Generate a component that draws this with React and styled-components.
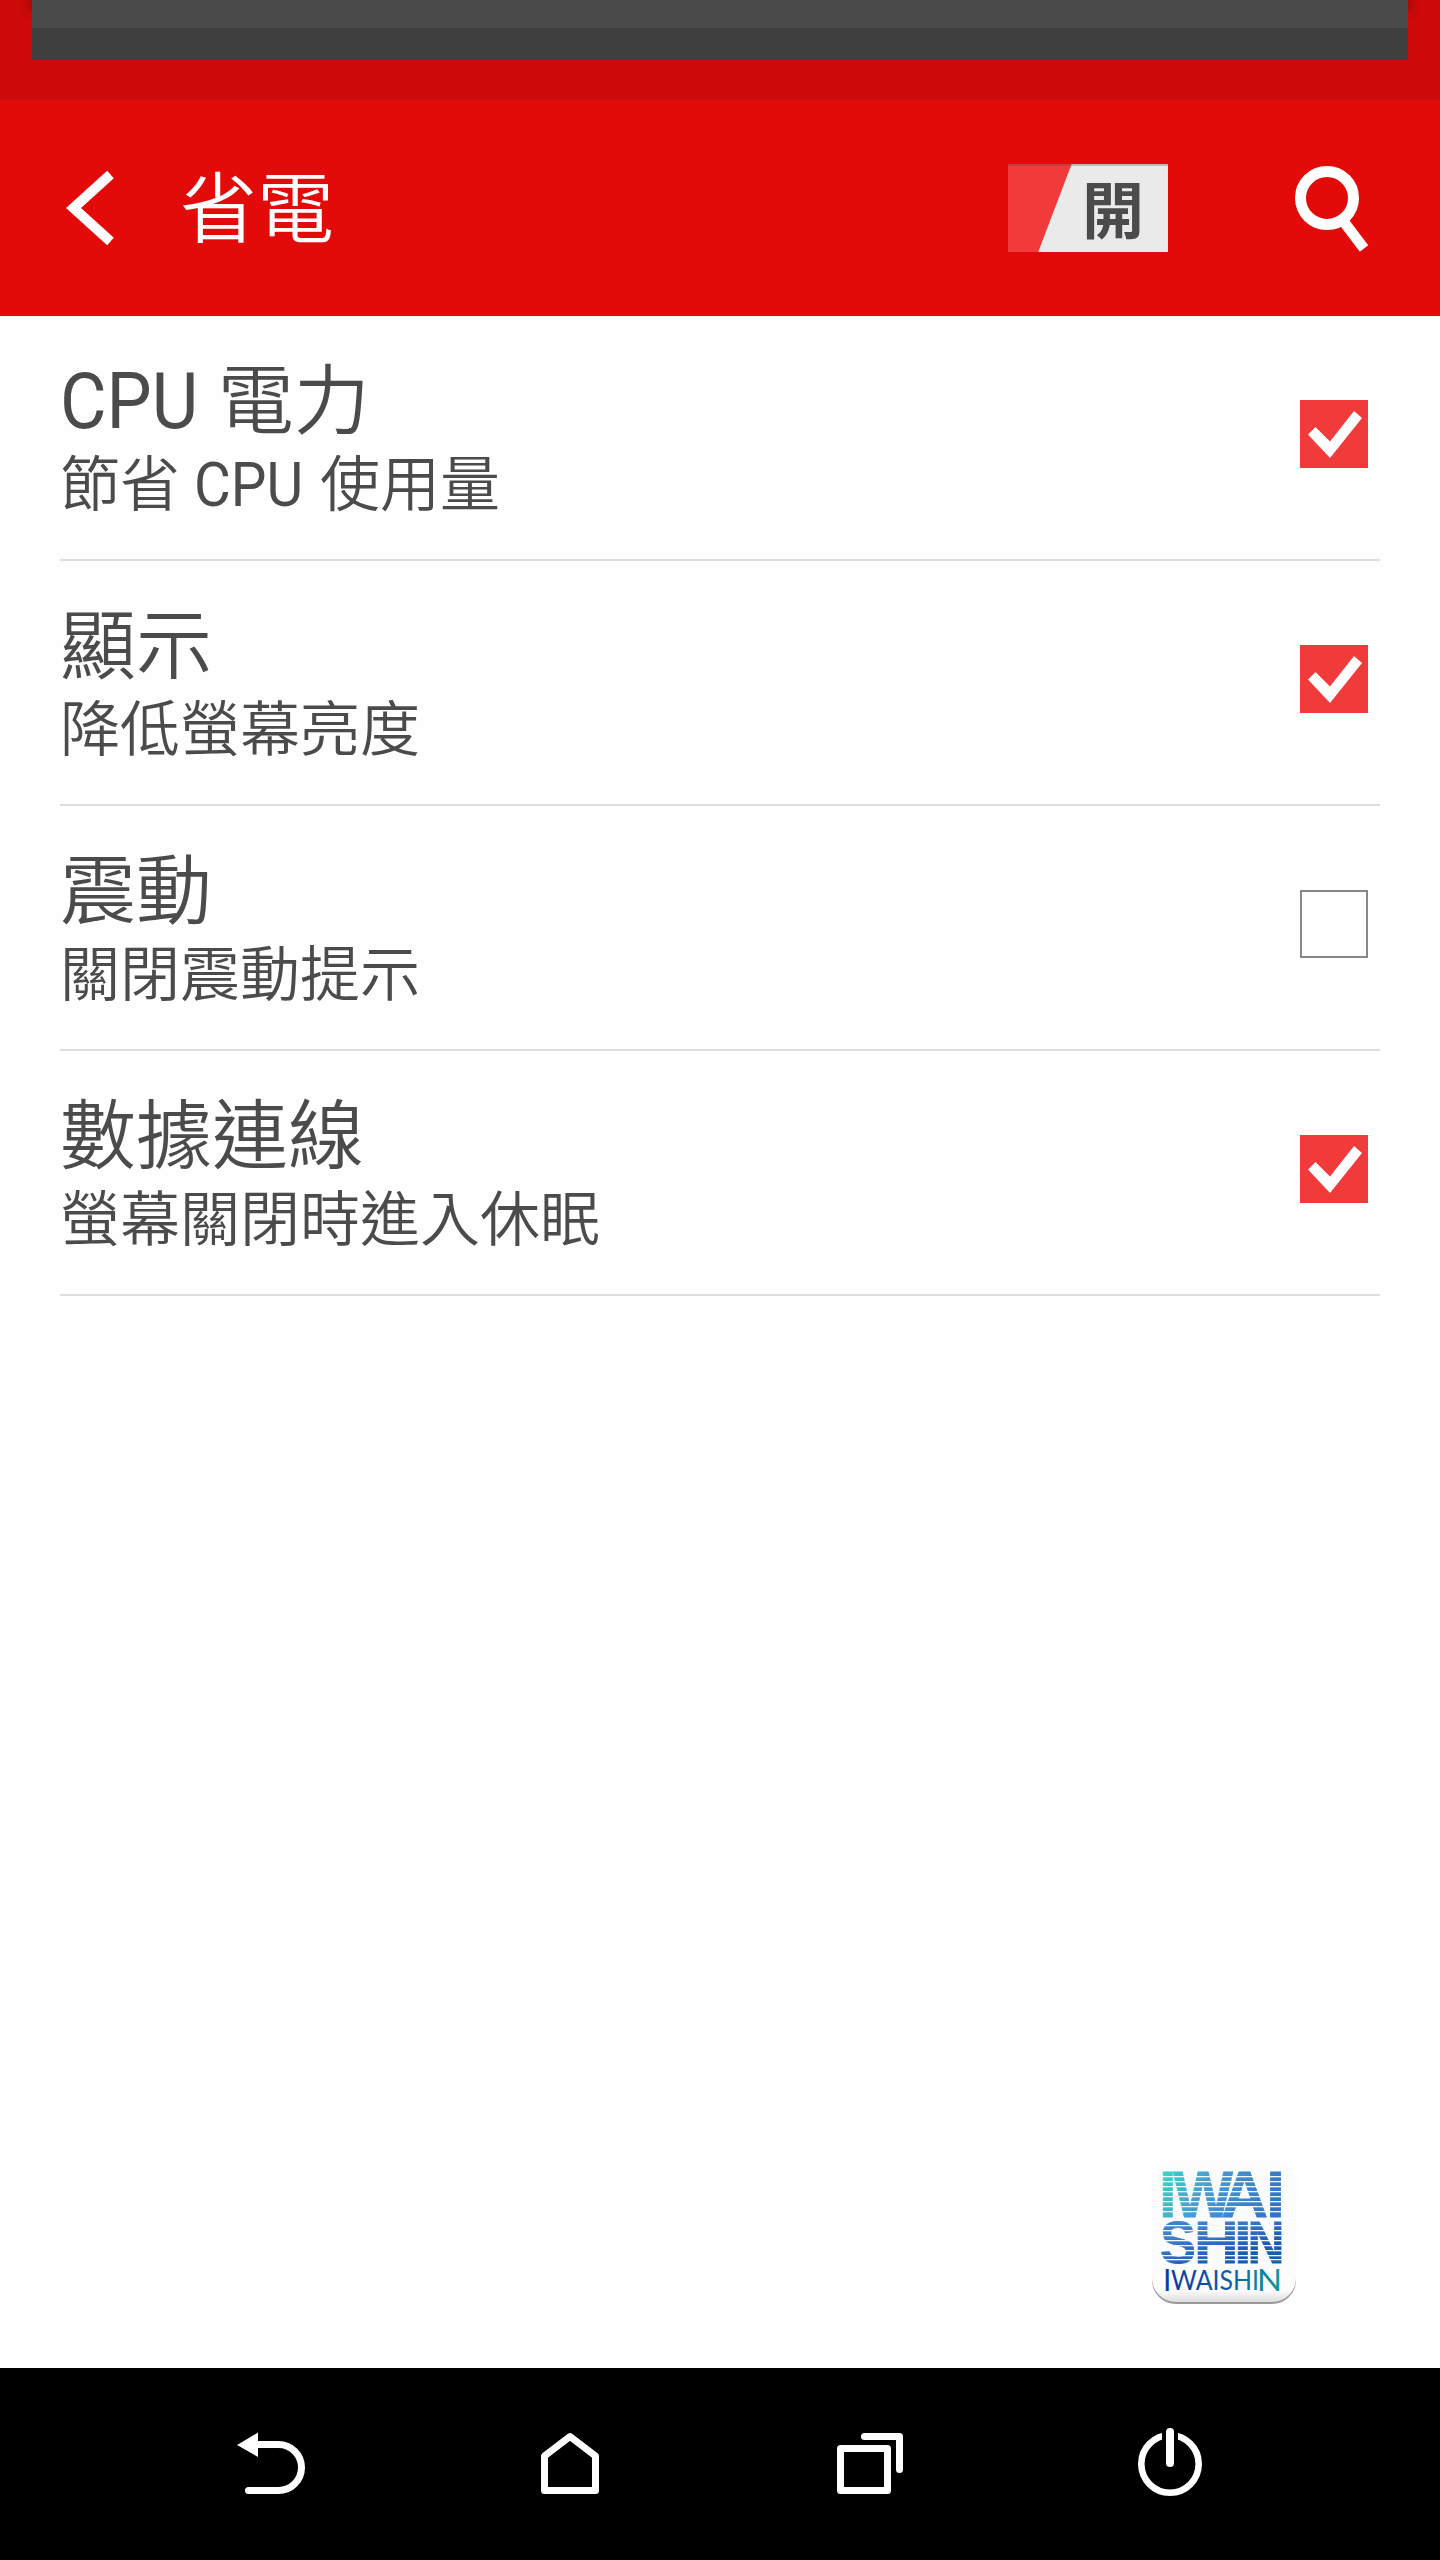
import React from "react";
import styled, { createGlobalStyle } from "styled-components";

const GlobalStyle = createGlobalStyle`
  body {
    margin: 0;
    background: #fefefe;
  }
`;

const Screen = styled.div`
  display: flex;
  flex-direction: column;
  width: 1440px;
  height: 2560px;
  overflow: hidden;
  background: #fefefe;
  color: #4b4b4b;
  font-family: "Noto Sans CJK TC", sans-serif;
  font-weight: 350;
`;

const StatusBar = styled.div`
  height: 100px;
  padding: 0 32px;
  box-sizing: border-box;
  background: #cd0a0a;
`;

const Shade = styled.div`
  height: 8px;
  box-shadow: 0 0 12px rgba(60, 0, 0, 0.9);
`;

const ShadePanel = styled.div`
  position: relative;
  height: 60px;
  margin-top: -8px;
  background: linear-gradient(#4b4b4b 28px, #404040 28px);
`;

const Header = styled.header`
  display: flex;
  align-items: center;
  height: 216px;
  box-sizing: border-box;
  padding: 0 70px 0 64px;
  background: #e30b09;
  color: #fff;
`;

const Title = styled.h1`
  flex: 1;
  margin: 0 0 8px 64px;
  font-size: 77px;
  font-weight: 350;
  line-height: 100px;
`;

const Toggle = styled.div`
  display: flex;
  align-items: center;
  justify-content: flex-end;
  width: 160px;
  height: 88px;
  box-sizing: border-box;
  padding: 0 24px 4px 0;
  margin-right: 126px;
  border-top: 2px solid rgba(75, 75, 75, 0.3);
  background: linear-gradient(110.8deg, #f13a3a 59px, #eaeaea 60px) border-box;
  color: #4b4b4b;
  font-size: 62px;
  font-weight: 700;
  line-height: 80px;
`;

const List = styled.ul`
  flex: 1;
  margin: 0;
  padding: 0 60px;
  list-style: none;
`;

const Row = styled.li`
  display: flex;
  justify-content: space-between;
  height: 245px;
  box-sizing: border-box;
  padding-right: 12px;
  border-bottom: 2px solid #ddd;
`;

const RowTitle = styled.div`
  height: 80px;
  margin-top: 39px;
  font-size: 76px;
  line-height: 80px;
  white-space: pre;
`;

const RowHint = styled.div`
  height: 72px;
  margin-top: 9px;
  font-size: 60px;
  line-height: 72px;
  white-space: pre;
  word-spacing: 1px;
`;

const Latin = styled.span`
  display: inline-block;
  width: 1.8em;
  font-family: Roboto, sans-serif;
  font-size: 1.03em;
  font-weight: 400;
  line-height: 0;
  transform: scaleX(0.915);
  transform-origin: left;
`;

const Checkbox = styled.div`
  width: 68px;
  height: 68px;
  box-sizing: border-box;
  margin-top: 84px;
  border: ${p => (p.$checked ? "none" : "2px solid #888")};
  background: ${p => (p.$checked ? "#f13a3a" : "transparent")};
`;

const Launcher = styled.div`
  align-self: flex-end;
  width: 144px;
  height: 144px;
  margin: 0 144px 64px 0;
`;

const NavBar = styled.nav`
  display: flex;
  justify-content: space-between;
  height: 192px;
  box-sizing: border-box;
  padding: 48px 222px 0;
  background: #000;
`;

const Icon = styled.svg`
  display: block;
  fill: none;
  stroke: #fff;
  stroke-width: 7;
`;

const NavIcon = styled(Icon).attrs({
  width: 96,
  height: 96,
  viewBox: "0 0 96 96"
})`
  stroke-linecap: round;
  stroke-linejoin: round;
`;

const LogoText = styled.text.attrs({ lengthAdjust: "spacingAndGlyphs" })`
  font-family: ${p => (p.$small ? "Lato" : '"Liberation Sans"')}, sans-serif;
  font-weight: ${p => (p.$small ? 400 : 700)};
`;

const rows = [
  { title: "CPU 電力", hint: "節省 CPU 使用量", checked: true },
  { title: "顯示", hint: "降低螢幕亮度", checked: true },
  { title: "震動", hint: "關閉震動提示", checked: false },
  { title: "數據連線", hint: "螢幕關閉時進入休眠", checked: true }
];

// latin words are set in a narrower face than the chinese text
const Label = ({ text }) =>
  text
    .split(/([A-Z]+)/)
    .map((part, i) => (i % 2 ? <Latin key={i}>{part}</Latin> : part));

const Check = () => (
  <svg width="68" height="68" viewBox="0 0 68 68">
    <path d="M8 34.5 15.5 27 30 41.5 54 11 62 18 30 58Z" fill="#fff" />
  </svg>
);

// [letter, x, width]
const logoTop = [["I", 7, 17.5], ["W", 21, 60], ["A", 69, 47], ["I", 114, 19]];
const logoMiddle = [
  ["S", 8, 36],
  ["H", 42, 44.5],
  ["I", 82, 17.5],
  ["N", 95.5, 37]
];
const topGaps = [16, 21, 26, 31, 36, 41, 46, 51];
const middleGaps = [65, 70, 75, 80, 85, 90, 95, 99];

const Logo = () => (
  <svg width="144" height="144" viewBox="0 0 144 144">
    <defs>
      <linearGradient
        id="logoTop"
        gradientUnits="userSpaceOnUse"
        x1="12"
        y1="12"
        x2="110"
        y2="70"
      >
        <stop offset="0" stopColor="#36d6c4" />
        <stop offset="0.4" stopColor="#4b98d2" />
        <stop offset="1" stopColor="#3274c4" />
      </linearGradient>
      <linearGradient
        id="logoMiddle"
        gradientUnits="userSpaceOnUse"
        x1="70"
        y1="60"
        x2="84"
        y2="106"
      >
        <stop offset="0" stopColor="#3f80cc" />
        <stop offset="0.8" stopColor="#1a5aae" />
        <stop offset="1" stopColor="#1560a8" />
      </linearGradient>
      <linearGradient
        id="logoBottom"
        gradientUnits="userSpaceOnUse"
        x1="12"
        y1="0"
        x2="130"
        y2="0"
      >
        <stop offset="0" stopColor="#0b3a9c" />
        <stop offset="0.5" stopColor="#0e57a6" />
        <stop offset="1" stopColor="#0a9c9c" />
      </linearGradient>
      <linearGradient id="logoTile" x1="0" x2="0" y1="0" y2="1">
        <stop offset="0.92" stopColor="#fcfcfc" />
        <stop offset="1" stopColor="#dcdcdc" />
      </linearGradient>
    </defs>
    <rect y="20" width="144" height="124" rx="24" fill="#999" />
    <rect width="144" height="142" rx="24" fill="url(#logoTile)" />
    <g
      fill="url(#logoTop)"
      stroke="url(#logoTop)"
      strokeWidth="0.800"
      fontSize="65"
    >
      {logoTop.map(([letter, x, width], i) => (
        <LogoText key={i} x={x} y="56.500" textLength={width}>
          {letter}
        </LogoText>
      ))}
    </g>
    <g
      fill="url(#logoMiddle)"
      stroke="url(#logoMiddle)"
      strokeWidth="0.800"
      fontSize="60"
    >
      {logoMiddle.map(([letter, x, width]) => (
        <LogoText key={letter} x={x} y="102.500" textLength={width}>
          {letter}
        </LogoText>
      ))}
    </g>
    {topGaps.concat(middleGaps).map(y => (
      <rect key={y} x="8" y={y} width="124" height="1.3" fill="#f4fbfc" />
    ))}
    <g fill="url(#logoBottom)">
      <LogoText $small x="11" y="131" fontSize="30">
        I
      </LogoText>
      <LogoText $small x="19" y="129.5" fontSize="26" textLength="88">
        WAISHI
      </LogoText>
      <LogoText $small x="105" y="131" fontSize="30" textLength="25">
        N
      </LogoText>
    </g>
  </svg>
);

export default function App() {
  return (
    <Screen>
      <GlobalStyle />
      <StatusBar>
        <Shade />
        <ShadePanel />
      </StatusBar>
      <Header>
        <Icon width="52" height="76" viewBox="0 0 52 76">
          <path d="M46.500 4.500 9.500 38l37 33.500" strokeWidth="10" />
        </Icon>
        <Title>省電</Title>
        <Toggle>開</Toggle>
        <Icon width="76" height="88" viewBox="0 0 76 88">
          <circle cx="33" cy="34" r="26.500" strokeWidth="11" />
          <path d="M50 58 70 84.500" strokeWidth="10.500" />
        </Icon>
      </Header>
      <List>
        {rows.map(row => (
          <Row key={row.title}>
            <div>
              <RowTitle>
                <Label text={row.title} />
              </RowTitle>
              <RowHint>
                <Label text={row.hint} />
              </RowHint>
            </div>
            <Checkbox $checked={row.checked}>
              {row.checked && <Check />}
            </Checkbox>
          </Row>
        ))}
      </List>
      <Launcher>
        <Logo />
      </Launcher>
      <NavBar>
        <NavIcon>
          <path d="M15 29 36 16.500V41Z" fill="#fff" stroke="none" />
          <path d="M34 28.500H56.500a23 23 0 0 1 0 46H26.500" />
        </NavIcon>
        <NavIcon>
          <path d="M22.500 40 48 20.500 73.500 40V74.500H22.500Z" />
        </NavIcon>
        <NavIcon>
          <path d="M18.500 32.500H65.500V74.500H18.500Z" />
          <path d="M42.500 20.500H77.500V53.500" />
        </NavIcon>
        <NavIcon>
          <circle cx="48" cy="48" r="28.700" strokeWidth="6.600" />
          <path d="M48 14V40" stroke="#000" strokeWidth="16" strokeLinecap="butt" />
          <path d="M48 16V47" strokeWidth="8" />
        </NavIcon>
      </NavBar>
    </Screen>
  );
}
